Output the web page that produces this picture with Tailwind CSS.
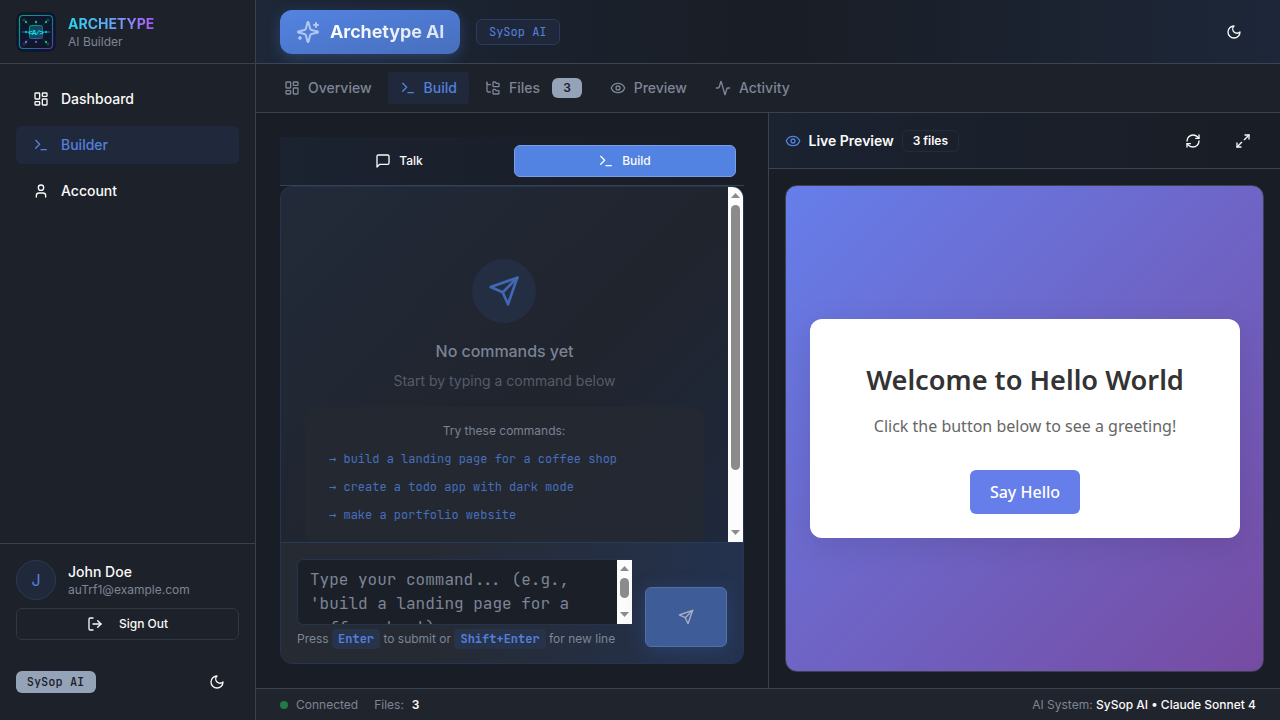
<!DOCTYPE html>
<html lang="en">
<head>
<meta charset="utf-8">
<title>Archetype AI Builder</title>
<script src="https://cdn.jsdelivr.net/npm/@tailwindcss/browser@4"></script>
</head>
<body class="bg-[#191d25] font-['Inter',sans-serif] text-[#fafafa] antialiased">
<svg class="hidden">
  <defs>
    <g id="grid"><rect width="7" height="9" x="3" y="3" rx="1"/><rect width="7" height="5" x="14" y="3" rx="1"/><rect width="7" height="9" x="14" y="12" rx="1"/><rect width="7" height="5" x="3" y="16" rx="1"/></g>
    <g id="term"><path d="m4 17 6-6-6-6"/><path d="M12 19h8"/></g>
    <g id="user"><path d="M19 21v-2a4 4 0 0 0-4-4H9a4 4 0 0 0-4 4v2"/><circle cx="12" cy="7" r="4"/></g>
    <g id="tree"><path d="M20 10a1 1 0 0 0 1-1V6a1 1 0 0 0-1-1h-2.500a1 1 0 0 1-.8-.4l-.9-1.200A1 1 0 0 0 15 3h-2a1 1 0 0 0-1 1v5a1 1 0 0 0 1 1Z"/><path d="M20 21a1 1 0 0 0 1-1v-3a1 1 0 0 0-1-1h-2.900a1 1 0 0 1-.88-.55l-.42-.85a1 1 0 0 0-.92-.6H13a1 1 0 0 0-1 1v5a1 1 0 0 0 1 1Z"/><path d="M3 5a2 2 0 0 0 2 2h3"/><path d="M3 3v13a2 2 0 0 0 2 2h3"/></g>
    <g id="eye"><path d="M2.062 12.348a1 1 0 0 1 0-.696 10.750 10.750 0 0 1 19.876 0 1 1 0 0 1 0 .696 10.750 10.750 0 0 1-19.876 0"/><circle cx="12" cy="12" r="3"/></g>
    <g id="activity"><path d="M22 12h-2.480a2 2 0 0 0-1.930 1.460l-2.350 8.360a.25.25 0 0 1-.48 0L9.240 2.180a.25.25 0 0 0-.48 0l-2.350 8.360A2 2 0 0 1 4.490 12H2"/></g>
    <g id="moon"><path d="M12 3a6 6 0 0 0 9 9 9 9 0 1 1-9-9Z"/></g>
    <g id="msg"><path d="M21 15a2 2 0 0 1-2 2H7l-4 4V5a2 2 0 0 1 2-2h14a2 2 0 0 1 2 2z"/></g>
    <g id="send"><path d="m22 2-7 20-4-9-9-4Z"/><path d="M22 2 11 13"/></g>
    <g id="logout"><path d="M9 21H5a2 2 0 0 1-2-2V5a2 2 0 0 1 2-2h4"/><path d="m16 17 5-5-5-5"/><path d="M21 12H9"/></g>
    <g id="refresh"><path d="M3 12a9 9 0 0 1 9-9 9.750 9.750 0 0 1 6.740 2.740L21 8"/><path d="M21 3v5h-5"/><path d="M21 12a9 9 0 0 1-9 9 9.750 9.750 0 0 1-6.740-2.740L3 16"/><path d="M8 16H3v5"/></g>
    <g id="expand"><path d="M15 3h6v6"/><path d="m21 3-7 7"/><path d="m3 21 7-7"/><path d="M9 21H3v-6"/></g>
    <g id="sparkles"><path d="M9.937 15.500A2 2 0 0 0 8.500 14.063l-6.135-1.582a.5.5 0 0 1 0-.962L8.500 9.936A2 2 0 0 0 9.937 8.500l1.582-6.135a.5.5 0 0 1 .963 0L14.063 8.500A2 2 0 0 0 15.500 9.937l6.135 1.581a.5.5 0 0 1 0 .964L15.500 14.063a2 2 0 0 0-1.437 1.437l-1.582 6.135a.5.5 0 0 1-.963 0z"/><path d="M20 3v4"/><path d="M22 5h-4"/><path d="M4 17v2"/><path d="M5 18H3"/></g>
  </defs>
</svg>
<div class="flex h-[720px] w-[1280px] overflow-hidden">
  <aside class="flex w-64 shrink-0 flex-col border-r border-[#3b414d] bg-[#1d2129]">
    <div class="flex h-16 shrink-0 items-center gap-3 border-b border-[#3b414d] px-4">
      <svg class="size-10" viewBox="0 0 40 40" fill="none">
        <defs><linearGradient id="lg" x1="0" y1="0" x2="1" y2="1"><stop offset="0" stop-color="#0fa577"/><stop offset=".5" stop-color="#0b7f9c"/><stop offset="1" stop-color="#5f37b0"/></linearGradient></defs>
        <rect width="40" height="40" rx="8" fill="#0f172a"/>
        <rect x="3.500" y="3.500" width="33" height="33" rx="3.500" stroke="url(#lg)" stroke-width="1.200"/>
        <g stroke="#0e7490" stroke-width=".6" opacity=".5"><path d="M10 10l5 5M30 10l-5 5M10 30l5-5M30 30l-5-5M20 10v4M20 30v-4"/></g>
        <g fill="#14494d"><circle cx="8" cy="8" r="1.500"/><circle cx="32" cy="8" r="1.500"/><circle cx="32" cy="32" r="1.500"/></g>
        <circle cx="8" cy="32" r="1.500" fill="#33295f"/>
        <path d="M6 20h8M26 20h8" stroke="#0e7f96" stroke-width="1"/>
        <g fill="#10b981"><circle cx="10" cy="10" r="1.200"/><circle cx="20" cy="10" r="1.200"/><circle cx="30" cy="10" r="1.200"/><circle cx="30" cy="30" r="1.200"/></g>
        <g fill="#8b5cf6"><circle cx="10" cy="30" r="1.200"/><circle cx="20" cy="30" r="1"/></g>
        <g fill="#06b6d4"><circle cx="10" cy="20" r="1.200"/><circle cx="30" cy="20" r="1.200"/></g>
        <rect x="13.500" y="13.500" width="13" height="13" rx="2" fill="#124a5c" stroke="url(#lg)"/>
        <text x="20" y="22.700" text-anchor="middle" font-family="Liberation Mono, monospace" font-weight="700" font-size="8" textLength="16" fill="#12dcea">&lt;A/&gt;</text>
      </svg>
      <div>
        <div class="w-fit bg-linear-to-r from-[#22d3ee] via-[#60a5fa] to-[#a855f7] bg-clip-text text-sm font-bold text-transparent">ARCHETYPE</div>
        <div class="text-xs text-[#7d8596]">AI Builder</div>
      </div>
    </div>
    <nav class="flex flex-1 flex-col gap-2 px-4 pt-4 text-sm font-medium">
      <a class="flex h-[38px] items-center gap-3 px-[17px]"><svg class="size-4 fill-none stroke-current stroke-2" viewBox="0 0 24 24" stroke-linecap="round" stroke-linejoin="round"><use href="#grid"/></svg>Dashboard</a>
      <a class="flex h-[38px] items-center gap-3 rounded-md bg-[#20293b] px-[17px] text-[#5380dc]"><svg class="size-4 fill-none stroke-current stroke-2" viewBox="0 0 24 24" stroke-linecap="round" stroke-linejoin="round"><use href="#term"/></svg>Builder</a>
      <a class="flex h-[38px] items-center gap-3 px-[17px]"><svg class="size-4 fill-none stroke-current stroke-2" viewBox="0 0 24 24" stroke-linecap="round" stroke-linejoin="round"><use href="#user"/></svg>Account</a>
    </nav>
    <div class="h-[177px] border-t border-[#3b414d] px-4 pt-4">
      <div class="flex items-center gap-3">
        <div class="flex size-10 items-center justify-center rounded-full border border-[#2b3b52] bg-[#20293b] text-base text-[#5380dc]">J</div>
        <div class="pt-0.5">
          <div class="text-sm leading-4 font-medium">John Doe</div>
          <div class="mt-0.5 text-xs leading-4 text-[#7d8596]">auTrf1@example.com</div>
        </div>
      </div>
      <div class="mt-2 flex h-8 items-center justify-center gap-4 rounded-md border border-[#31363f] text-xs font-medium"><svg class="size-4 fill-none stroke-current stroke-2" viewBox="0 0 24 24" stroke-linecap="round" stroke-linejoin="round"><use href="#logout"/></svg>Sign Out</div>
      <div class="mt-6 flex items-center justify-between">
        <span class="flex h-[22px] w-20 items-center justify-center rounded-md bg-[#94a3b8] pr-px font-['JetBrains_Mono','Liberation_Mono',monospace] text-xs font-medium text-[#1d2129]">SySop AI</span>
        <span class="mr-[14px] flex h-9 items-center"><svg class="size-4 fill-none stroke-current stroke-2" viewBox="0 0 24 24" stroke-linecap="round" stroke-linejoin="round"><use href="#moon"/></svg></span>
      </div>
    </div>
  </aside>

  <div class="flex min-w-0 flex-1 flex-col">
    <header class="flex h-16 shrink-0 items-center border-b border-[#3b4453] bg-linear-to-r from-[#1d2738] via-[#191d25] to-[#1d2739] px-6">
      <div class="flex h-11 w-[180px] items-center gap-2.5 rounded-xl bg-linear-to-br from-[#5383e2] to-[#476fbd] pl-4 shadow-[0_4px_14px_rgba(83,131,226,0.3)]">
        <svg class="size-6 fill-none stroke-[#b3c7f0] stroke-2" viewBox="0 0 24 24" stroke-linecap="round" stroke-linejoin="round"><use href="#sparkles"/></svg>
        <span class="bg-linear-to-r from-white to-white/80 bg-clip-text text-lg font-bold tracking-[-0.1px] whitespace-nowrap text-transparent">Archetype AI</span>
      </div>
      <span class="ml-4 flex h-[26px] w-[84px] items-center justify-center rounded-md border border-[#263c60] bg-[#1f283a] pr-[0.500px] font-['JetBrains_Mono','Liberation_Mono',monospace] text-xs text-[#5380dc]">SySop AI</span>
      <svg class="mr-[14px] ml-auto size-4 fill-none stroke-current stroke-2" viewBox="0 0 24 24" stroke-linecap="round" stroke-linejoin="round"><use href="#moon"/></svg>
    </header>
    <nav class="flex h-[49px] shrink-0 items-center gap-1 border-b border-[#3b414d] bg-[#1d2129] px-4 text-sm font-medium text-[#7d8596]">
      <a class="flex h-8 items-center gap-2 px-3"><svg class="size-4 fill-none stroke-current stroke-2" viewBox="0 0 24 24" stroke-linecap="round" stroke-linejoin="round"><use href="#grid"/></svg>Overview</a>
      <a class="flex h-8 items-center gap-2 rounded-[3px] bg-[#20293b] px-3 text-[#5380dc]"><svg class="size-4 fill-none stroke-current stroke-2" viewBox="0 0 24 24" stroke-linecap="round" stroke-linejoin="round"><use href="#term"/></svg>Build</a>
      <a class="flex h-8 items-center gap-2 px-3"><svg class="size-4 fill-none stroke-current stroke-2" viewBox="0 0 24 24" stroke-linecap="round" stroke-linejoin="round"><use href="#tree"/></svg>Files<span class="ml-1 flex h-5 w-[30px] items-center justify-center rounded-md bg-[#94a3b8] text-xs font-semibold text-[#1d2129]">3</span></a>
      <a class="-ml-[0.300px] flex h-8 items-center gap-2 px-3"><svg class="size-4 fill-none stroke-current stroke-2" viewBox="0 0 24 24" stroke-linecap="round" stroke-linejoin="round"><use href="#eye"/></svg>Preview</a>
      <a class="flex h-8 items-center gap-2 px-3"><svg class="size-4 fill-none stroke-current stroke-2" viewBox="0 0 24 24" stroke-linecap="round" stroke-linejoin="round"><use href="#activity"/></svg>Activity</a>
    </nav>

    <main class="flex min-h-0 flex-1">
      <section class="flex w-[512px] shrink-0 flex-col p-6">
        <div class="flex h-[49px] shrink-0 gap-1 border-b border-[#344053] bg-linear-to-r from-[#1b2230] to-[#191d25] p-2 text-xs font-medium">
          <div class="flex h-8 w-[222px] items-center justify-center gap-2"><svg class="size-4 fill-none stroke-current stroke-2" viewBox="0 0 24 24" stroke-linecap="round" stroke-linejoin="round"><use href="#msg"/></svg>Talk</div>
          <div class="flex h-8 w-[222px] items-center justify-center gap-2 rounded-md border border-[#7a9eea] bg-[#5383e2] pr-px"><svg class="size-4 fill-none stroke-current stroke-2" viewBox="0 0 24 24" stroke-linecap="round" stroke-linejoin="round"><use href="#term"/></svg>Build</div>
        </div>
        <div class="flex min-h-0 flex-1 flex-col overflow-hidden rounded-xl border border-[#243552] bg-linear-to-br from-[#222a39] via-[#20242d] to-[#1e2a42]">
          <div class="flex h-[355px] shrink-0">
            <div class="flex min-w-0 flex-1 flex-col items-center overflow-hidden px-6 pt-[72px]">
              <div class="mr-px flex size-16 shrink-0 items-center justify-center rounded-full bg-[#232e42]"><svg class="size-8 fill-none stroke-[#4268b4] stroke-2" viewBox="0 0 24 24" stroke-linecap="round" stroke-linejoin="round"><use href="#send"/></svg></div>
              <div class="mt-4 text-base font-medium tracking-[-0.050px] text-[#7a8293]">No commands yet</div>
              <div class="mt-2 text-sm text-[#555c69]">Start by typing a command below</div>
              <div class="mt-4 h-[137px] w-full shrink-0 rounded-xl bg-[#262a31]/75 px-6 pt-4">
                <div class="mr-px text-center text-xs text-[#7a8293]">Try these commands:</div>
                <div class="mt-3 flex flex-col gap-3 font-['JetBrains_Mono','Liberation_Mono',monospace] text-xs text-[#466fbe]">
                  <div class="h-4"><span class="font-['DejaVu_Sans_Mono']">→</span> build a landing page for a coffee shop</div>
                  <div class="h-4"><span class="font-['DejaVu_Sans_Mono']">→</span> create a todo app with dark mode</div>
                  <div class="h-4"><span class="font-['DejaVu_Sans_Mono']">→</span> make a portfolio website</div>
                </div>
              </div>
            </div>
            <div class="flex w-[15px] shrink-0 flex-col items-center bg-[#fcfcfc]">
              <svg class="h-[18px] w-[15px] shrink-0 fill-[#8b8b8b]" viewBox="0 0 15 18"><path d="M3 11h9L7.500 6z"/></svg>
              <div class="h-[265px] w-[9px] rounded-full bg-[#8b8b8b]"></div>
              <svg class="mt-auto h-[18px] w-[15px] fill-[#8b8b8b]" viewBox="0 0 15 18"><path d="M3 6h9l-4.500 5z"/></svg>
            </div>
          </div>
          <div class="flex flex-1 gap-[13px] border-t border-[#293a55] bg-linear-to-r from-[#262a32] from-30% to-[#24324f] p-4">
            <div class="w-[335px] shrink-0">
              <div class="flex h-[66px] overflow-hidden rounded-md rounded-r-none border-y border-l border-[#24344f] bg-[#1b1f28]">
                <div class="flex-1 overflow-hidden px-3 pt-2 font-['JetBrains_Mono','Liberation_Mono',monospace] text-base leading-6 whitespace-nowrap text-[#7d8596]">Type your command... (e.g.,<br>'build a landing page for a<br>coffee shop')</div>
                <div class="flex w-[15px] flex-col items-center bg-[#fcfcfc]">
                  <svg class="h-[18px] w-[15px] shrink-0 fill-[#8b8b8b]" viewBox="0 0 15 18"><path d="M3 11h9L7.500 6z"/></svg>
                  <div class="h-5 w-[9px] rounded-full bg-[#8b8b8b]"></div>
                  <svg class="mt-auto h-[18px] w-[15px] shrink-0 fill-[#8b8b8b]" viewBox="0 0 15 18"><path d="M3 6h9l-4.500 5z"/></svg>
                </div>
              </div>
              <div class="mt-1 flex h-5 items-center text-xs whitespace-nowrap text-[#7d8596]">Press<kbd class="mx-[3.400px] flex h-5 items-center rounded bg-[#27334a] px-1.5 font-['JetBrains_Mono','Liberation_Mono',monospace] font-semibold text-[#5380dc]">Enter</kbd>to submit or<kbd class="mx-[3.400px] flex h-5 items-center rounded bg-[#27334a] px-1.5 font-['JetBrains_Mono','Liberation_Mono',monospace] font-semibold text-[#5380dc]">Shift+Enter</kbd>for new line</div>
            </div>
            <div class="mt-7 flex h-[60px] w-[82px] items-center justify-center rounded-md border border-[#54709f] bg-[#3d5c98] shadow-[0_4px_20px_rgba(60,100,190,0.3)]"><svg class="size-4 fill-none stroke-[#a7b0c2] stroke-2" viewBox="0 0 24 24" stroke-linecap="round" stroke-linejoin="round"><use href="#send"/></svg></div>
          </div>
        </div>
      </section>

      <section class="flex min-w-0 flex-1 flex-col border-l border-[#3b414d]">
        <div class="flex h-14 shrink-0 items-center border-b border-[#3b4453] bg-linear-to-r from-[#1b2230] to-[#191d25] px-4">
          <svg class="size-4 fill-none stroke-[#5380dc] stroke-2" viewBox="0 0 24 24" stroke-linecap="round" stroke-linejoin="round"><use href="#eye"/></svg>
          <span class="ml-[7.500px] text-sm font-semibold">Live Preview</span>
          <span class="ml-2 flex h-[22px] w-[57px] items-center justify-center rounded-md border border-[#262c37] text-xs font-semibold whitespace-nowrap">3 files</span>
          <div class="mr-[13px] ml-auto flex gap-[34px]">
            <svg class="size-4 fill-none stroke-current stroke-2" viewBox="0 0 24 24" stroke-linecap="round" stroke-linejoin="round"><use href="#refresh"/></svg>
            <svg class="size-4 fill-none stroke-current stroke-2" viewBox="0 0 24 24" stroke-linecap="round" stroke-linejoin="round"><use href="#expand"/></svg>
          </div>
        </div>
        <div class="flex flex-1 p-4">
          <div class="flex flex-1 items-center rounded-xl border border-[#3b414d] bg-[linear-gradient(135deg,#667eea_0%,#764ba2_100%)] pr-[23px] pl-6 font-['Noto_Sans',sans-serif]">
            <div class="flex h-[219px] w-full flex-col items-center rounded-xl bg-white pt-10 shadow-[0_8px_32px_rgba(0,0,0,0.1)]">
              <h1 class="text-[27.200px] leading-[42px] font-semibold text-[#333]">Welcome to Hello World</h1>
              <p class="mt-3 text-base leading-[26px] text-[#666]">Click the button below to see a greeting!</p>
              <button class="mt-[31px] h-11 w-[110px] rounded-md bg-[#667eea] text-base font-medium text-white">Say Hello</button>
            </div>
          </div>
        </div>
      </section>
    </main>

    <footer class="flex h-8 shrink-0 items-center border-t border-[#3b414d] bg-[#20242c] px-6 text-xs text-[#7d8596]">
      <span class="size-2 rounded-full bg-[#217a45]"></span>
      <span class="ml-2">Connected</span>
      <span class="ml-4">Files:</span><span class="ml-2 font-semibold text-[#fafafa]">3</span>
      <span class="ml-auto">AI System: <span class="font-medium text-[#fafafa]">SySop AI • Claude Sonnet 4</span></span>
    </footer>
  </div>
</div>
</body>
</html>
